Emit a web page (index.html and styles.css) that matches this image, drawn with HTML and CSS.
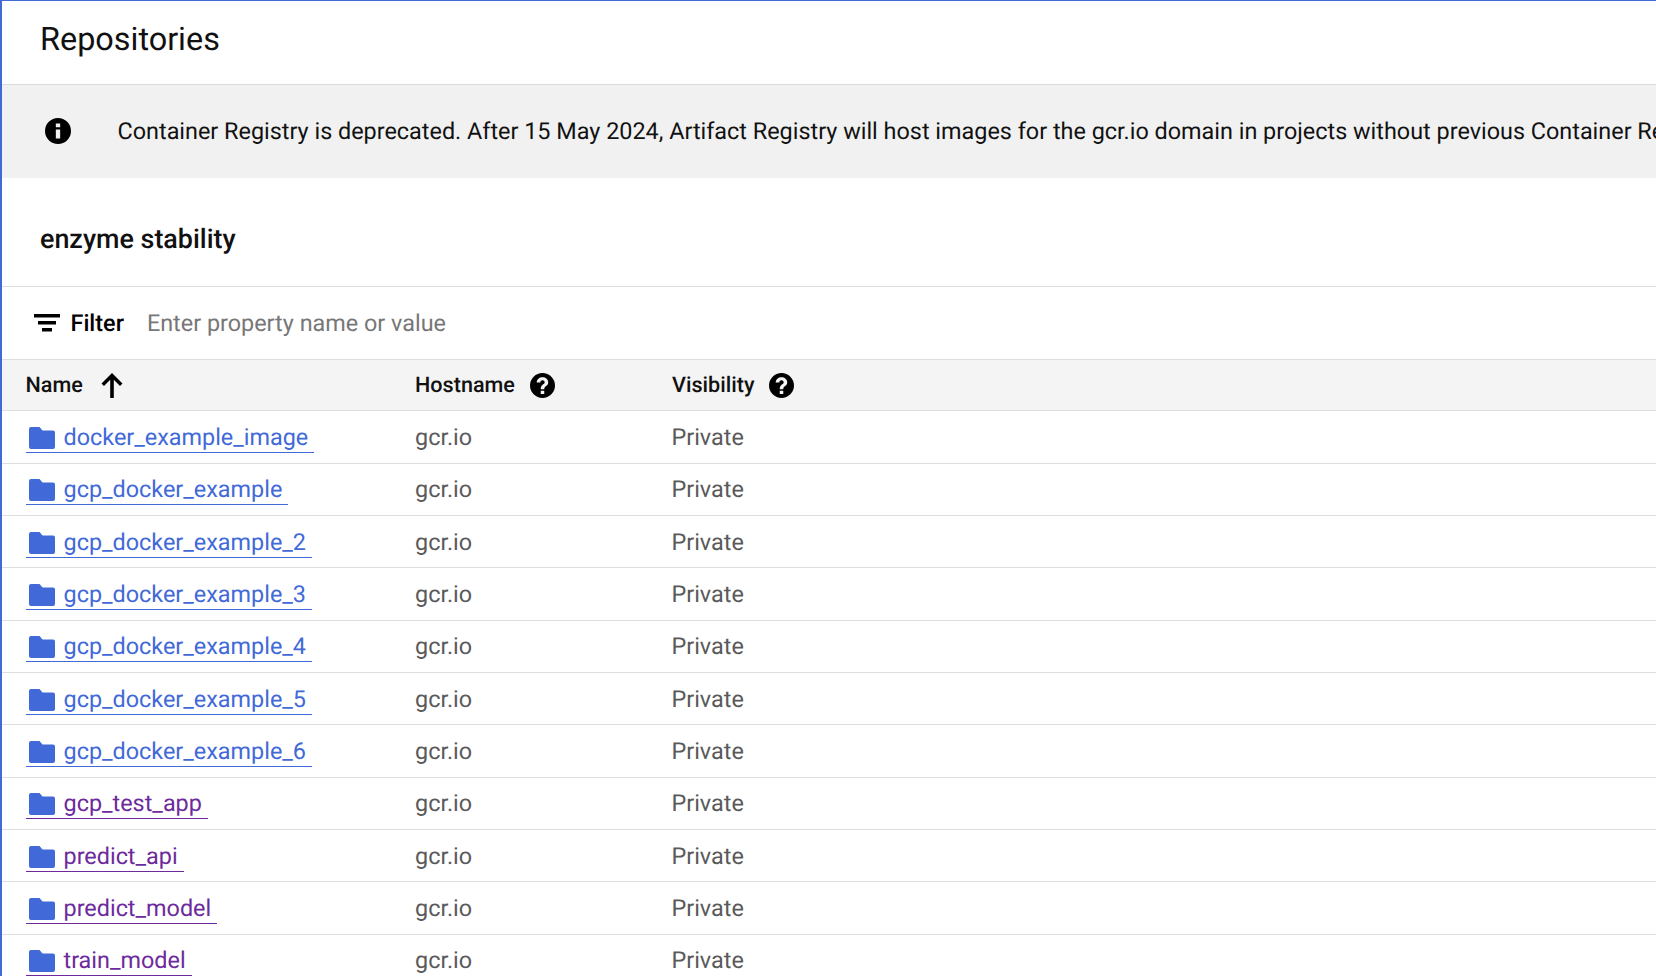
FILE: index.html
```html
<!DOCTYPE html>
<html lang="en">
<head>
	<meta charset="UTF-8">
	<title>Repositories</title>
	<link rel="stylesheet" href="styles.css">
</head>
<body>
	<div class="page">
		<header class="page-head">
			<h1>Repositories</h1>
		</header>

		<div class="banner">
			<svg class="banner-icon" viewBox="0 0 24 24"><path d="M12 0a12 12 0 1 0 0 24a12 12 0 0 0 0-24zm-2 5h4v3.500h-4zm0 5.500h4V19h-4z" fill-rule="evenodd"/></svg>
			<p>Container Registry is deprecated. After 15 May 2024, Artifact Registry will host images for the gcr.io domain in projects without previous Container Registry usage.</p>
		</div>

		<h2 class="project">enzyme stability</h2>

		<div class="filter">
			<svg class="filter-icon" viewBox="0 0 26 18"><path d="M0 0h26v3.500H0zM4 7h18v3.500H4zM8 14h10v3.500H8z"/></svg>
			<span class="filter-label">Filter</span>
			<span class="filter-hint">Enter property name or value</span>
		</div>

		<div class="row row-head">
			<div class="col-name">Name
				<svg class="sort-icon" viewBox="0 0 22 25"><path d="M11 0L.5 10.500l2.500 2.500 6.200-6.200V25h3.600V6.800l6.200 6.200 2.500-2.500z"/></svg>
			</div>
			<div class="col-host">Hostname
				<svg class="help-icon" viewBox="0 0 24 24"><use href="#help"/></svg>
			</div>
			<div class="col-vis">Visibility
				<svg class="help-icon" viewBox="0 0 24 24"><use href="#help"/></svg>
			</div>
		</div>

		<div class="row">
			<div class="col-name"><a class="repo" href="#"><svg class="folder" viewBox="0 0 26 22"><use href="#folder"/></svg>docker_example_image</a></div>
			<div class="col-host">gcr.io</div>
			<div class="col-vis">Private</div>
		</div>
		<div class="row">
			<div class="col-name"><a class="repo" href="#"><svg class="folder" viewBox="0 0 26 22"><use href="#folder"/></svg>gcp_docker_example</a></div>
			<div class="col-host">gcr.io</div>
			<div class="col-vis">Private</div>
		</div>
		<div class="row">
			<div class="col-name"><a class="repo" href="#"><svg class="folder" viewBox="0 0 26 22"><use href="#folder"/></svg>gcp_docker_example_2</a></div>
			<div class="col-host">gcr.io</div>
			<div class="col-vis">Private</div>
		</div>
		<div class="row">
			<div class="col-name"><a class="repo" href="#"><svg class="folder" viewBox="0 0 26 22"><use href="#folder"/></svg>gcp_docker_example_3</a></div>
			<div class="col-host">gcr.io</div>
			<div class="col-vis">Private</div>
		</div>
		<div class="row">
			<div class="col-name"><a class="repo" href="#"><svg class="folder" viewBox="0 0 26 22"><use href="#folder"/></svg>gcp_docker_example_4</a></div>
			<div class="col-host">gcr.io</div>
			<div class="col-vis">Private</div>
		</div>
		<div class="row">
			<div class="col-name"><a class="repo" href="#"><svg class="folder" viewBox="0 0 26 22"><use href="#folder"/></svg>gcp_docker_example_5</a></div>
			<div class="col-host">gcr.io</div>
			<div class="col-vis">Private</div>
		</div>
		<div class="row">
			<div class="col-name"><a class="repo" href="#"><svg class="folder" viewBox="0 0 26 22"><use href="#folder"/></svg>gcp_docker_example_6</a></div>
			<div class="col-host">gcr.io</div>
			<div class="col-vis">Private</div>
		</div>
		<div class="row">
			<div class="col-name"><a class="repo visited" href="#"><svg class="folder" viewBox="0 0 26 22"><use href="#folder"/></svg>gcp_test_app</a></div>
			<div class="col-host">gcr.io</div>
			<div class="col-vis">Private</div>
		</div>
		<div class="row">
			<div class="col-name"><a class="repo visited" href="#"><svg class="folder" viewBox="0 0 26 22"><use href="#folder"/></svg>predict_api</a></div>
			<div class="col-host">gcr.io</div>
			<div class="col-vis">Private</div>
		</div>
		<div class="row">
			<div class="col-name"><a class="repo visited" href="#"><svg class="folder" viewBox="0 0 26 22"><use href="#folder"/></svg>predict_model</a></div>
			<div class="col-host">gcr.io</div>
			<div class="col-vis">Private</div>
		</div>
		<div class="row">
			<div class="col-name"><a class="repo visited" href="#"><svg class="folder" viewBox="0 0 26 22"><use href="#folder"/></svg>train_model</a></div>
			<div class="col-host">gcr.io</div>
			<div class="col-vis">Private</div>
		</div>
	</div>

	<svg class="defs" width="0" height="0">
		<defs>
			<path id="folder" d="M2 0h8.500l3 3.500H24a2 2 0 0 1 2 2V20a2 2 0 0 1-2 2H2a2 2 0 0 1-2-2V2a2 2 0 0 1 2-2z"/>
			<path id="help" fill-rule="evenodd" d="M12 0a12 12 0 1 0 0 24a12 12 0 0 0 0-24zM10.300 17h3.400v3.200h-3.400zM12 4c3 0 5.500 2 5.500 4.800 0 2-1 3-2.300 4-1 .8-1.500 1.300-1.500 2.700h-3.400c0-2.300.8-3.400 2.300-4.600 1-.8 1.500-1.200 1.500-2.100 0-1-.9-1.800-2.100-1.800s-2.100.8-2.100 2H6.500C6.500 6 9 4 12 4z"/>
		</defs>
	</svg>
</body>
</html>
```

FILE: styles.css
```css
*, *:before, *:after {
	box-sizing: border-box;
}
html, body {
	margin: 0;
	height: 100%;
	overflow: hidden;
}
body {
	font-family: Roboto, sans-serif;
	color: #000;
	background: #fff;
	text-rendering: geometricPrecision;
}
.page {
	height: 976px;
	overflow: hidden;
	border-top: 1px solid #4169d8;
	border-left: 2px solid #4169d8;
}
.page-head {
	height: 84px;
	display: flex;
	align-items: center;
	padding-left: 38px;
	border-bottom: 1px solid #dcdcdc;
}
.page-head h1 {
	margin: 0 0 7px;
	font-size: 32.4px;
	font-weight: 400;
	color: #111;
}
.banner {
	height: 93px;
	display: flex;
	align-items: center;
	padding: 0 0 2px 43px;
	background: #f1f1f1;
	white-space: nowrap;
}
.banner p {
	margin: 0;
	font-size: 23.4px;
	color: #111;
}
.banner-icon {
	width: 26px;
	height: 26px;
	margin-right: 46.5px;
	flex: none;
}
.project {
	height: 109px;
	margin: 0;
	padding: 13px 0 0 38px;
	display: flex;
	align-items: center;
	font-size: 26.9px;
	font-weight: 500;
	color: #111;
	border-bottom: 1px solid #dcdcdc;
}
.filter {
	height: 72px;
	display: flex;
	align-items: center;
	padding-left: 32px;
}
.filter-icon {
	width: 26px;
	height: 18px;
	margin-right: 10.5px;
}
.filter-label {
	font-size: 23.4px;
	font-weight: 500;
	margin-right: 23px;
}
.filter-hint {
	font-size: 23.4px;
	color: #777;
}
.row {
	height: 52.33px;
	display: flex;
	align-items: center;
	border-bottom: 1px solid #dedede;
	font-size: 23.4px;
	color: #5a5a5a;
}
.row-head {
	height: 52.4px;
	background: #f4f4f4;
	border-top: 1px solid #dedede;
	font-weight: 500;
	font-size: 21.6px;
	color: #111;
}
.col-name {
	width: 413px;
	padding-left: 24px;
	display: flex;
	align-items: center;
}
.row-head .col-name {
	padding-left: 23.5px;
}
.col-host {
	width: 256.5px;
	display: flex;
	align-items: center;
}
.row-head .col-host {
	width: 257px;
}
.col-vis {
	display: flex;
	align-items: center;
}
.sort-icon {
	width: 22px;
	height: 25px;
	margin-left: 18px;
}
.help-icon {
	width: 25px;
	height: 25px;
	margin-left: 15px;
}
.repo {
	display: flex;
	align-items: center;
	color: #4169d8;
	text-decoration: none;
	border-bottom: 1px solid currentColor;
	padding: 0 6px 1px 3px;
	line-height: 28px;
	margin-top: 2px;
}
.repo.visited {
	color: #6c2a9c;
}
.folder {
	width: 26px;
	height: 22px;
	margin: 2px 8.5px 0 0;
	fill: #4169d8;
}
.defs {
	position: absolute;
}
```
